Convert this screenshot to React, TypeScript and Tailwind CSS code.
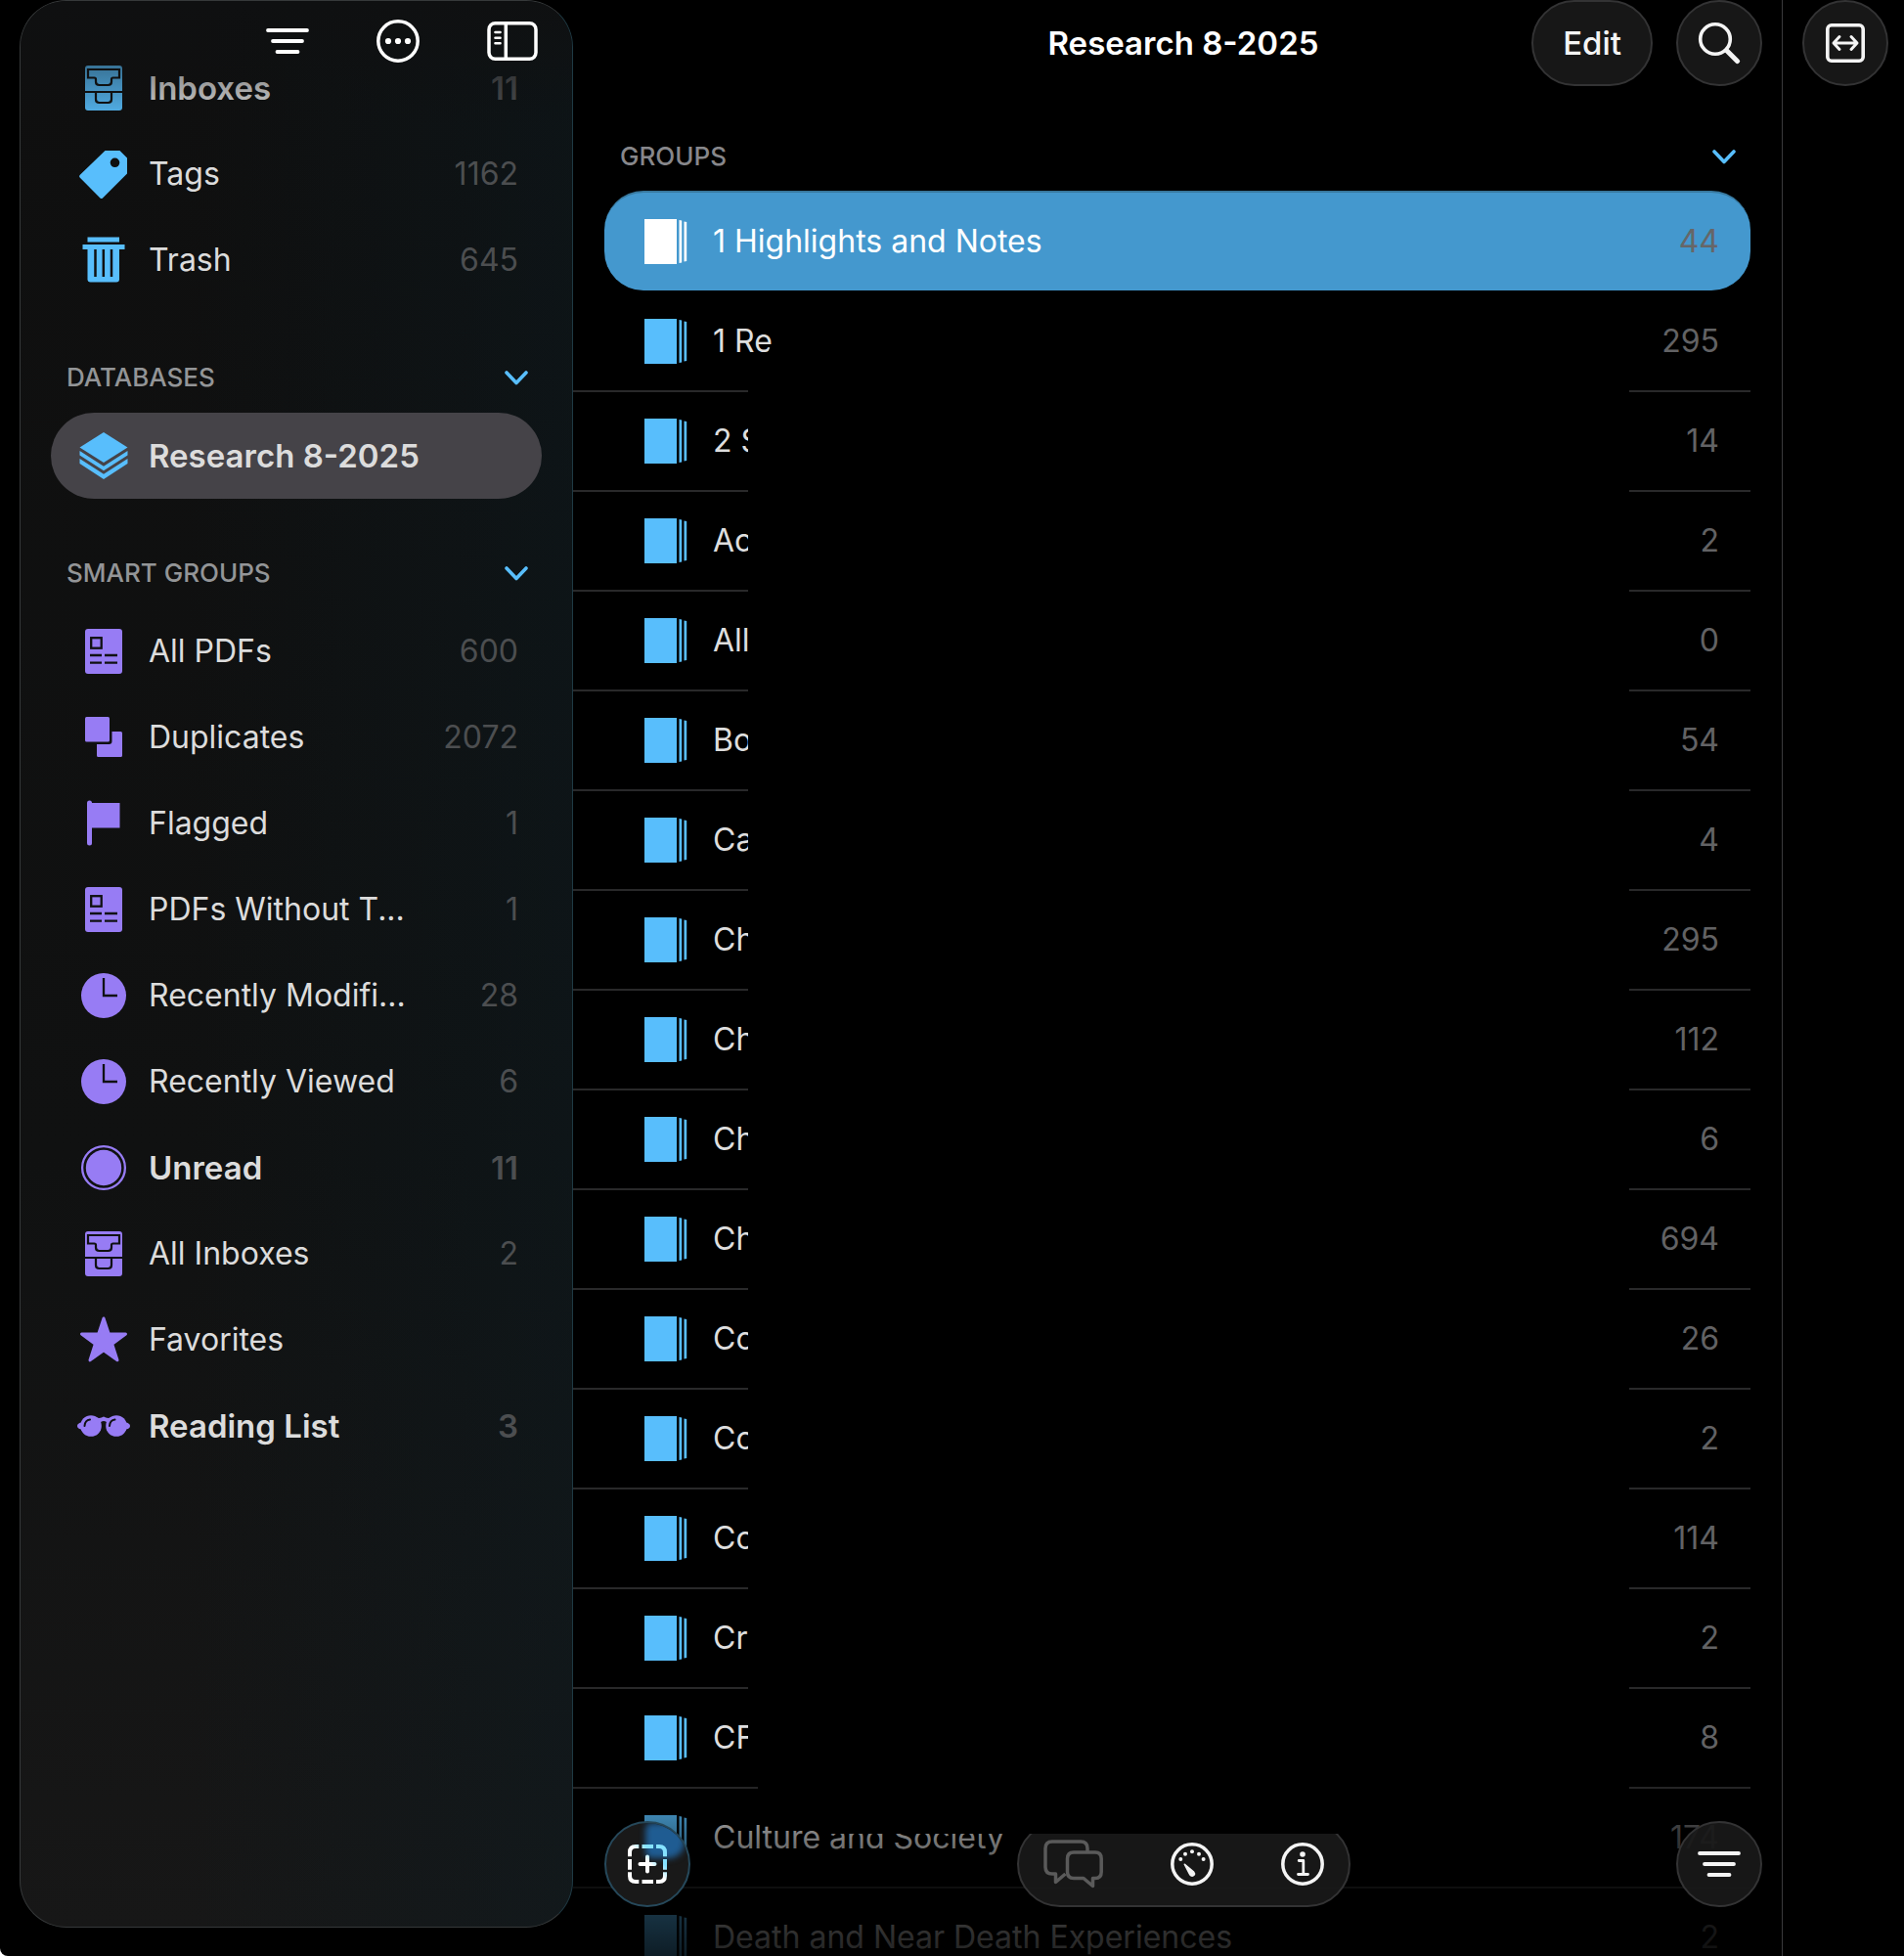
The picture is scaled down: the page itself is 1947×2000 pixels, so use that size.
import React from "react";

type IconProps = { className?: string };

const BoxesIcon = ({ className }: IconProps) => (
	<svg viewBox="0 0 56 56" className={className} fill="none">
		<rect x="9" y="5" width="38" height="46" rx="3" fill="currentColor" />
		<g stroke="#101112" strokeWidth="2.2">
			<path d="M12 9H44V17.5H37.5Q36 17.5 36 19V21.5Q36 25 32.5 25H23.5Q20 25 20 21.5V19Q20 17.5 18.5 17.5H12Z" />
			<path d="M9 32H47" />
			<path d="M20 33V39.5Q20 43 23.5 43H32.5Q36 43 36 39.5V33" />
		</g>
	</svg>
);

const TagIcon = ({ className }: IconProps) => (
	<svg viewBox="0 0 56 56" className={className}>
		<path
			fill="currentColor"
			fillRule="evenodd"
			d="M29.5 4H44.5L52 11.5V27.5L27 52.5Q25.7 53.6 24.4 52.5L3.6 31.5Q2.5 30.3 3.6 29ZM39.5 11.5A4.8 4.8 0 1 0 39.5 21.1A4.8 4.8 0 1 0 39.5 11.5Z"
		/>
	</svg>
);

const TrashIcon = ({ className }: IconProps) => (
	<svg viewBox="0 0 56 56" className={className}>
		<g fill="currentColor">
			<path d="M11.5 4.5H44V9.5H11.5ZM6.5 12H49.5V17H6.5Z" />
			<path d="M11.5 17H44V47.5Q44 50.5 41 50.5H14.5Q11.5 50.5 11.5 47.5Z" />
		</g>
		<path stroke="#101112" strokeWidth="2.5" d="M19.5 17V45M27.8 17V45M36 17V45" />
	</svg>
);

const LayersIcon = ({ className }: IconProps) => (
	<svg viewBox="0 0 56 56" className={className} fill="currentColor">
		<path d="M28 4L52.5 19.5L28 35L3.5 19.5Z" />
		<path d="M3.5 23L28 38.8L52.5 23V27.5L28 43.2L3.5 27.5Z" />
		<path d="M3.5 31L28 46.8L52.5 31V36L28 52L3.5 36Z" />
	</svg>
);

const DocumentIcon = ({ className }: IconProps) => (
	<svg viewBox="0 0 56 56" className={className} fill="none">
		<rect x="9" y="5" width="38" height="46" rx="3" fill="currentColor" />
		<g stroke="#101112" strokeWidth="2.3">
			<rect x="15.2" y="14.2" width="10.5" height="10.5" />
			<path d="M14 32H26M29 32H42M14 39.7H26M29 39.7H42" />
		</g>
	</svg>
);

const DuplicatesIcon = ({ className }: IconProps) => (
	<svg viewBox="0 0 56 56" className={className} fill="currentColor">
		<rect x="9" y="7" width="25" height="25.5" rx="1.5" />
		<path d="M36.5 22H45.5Q47 22 47 23.5V46.5Q47 48 45.5 48H22.5Q21 48 21 46.5V35H33.5Q36.5 35 36.5 32Z" />
	</svg>
);

const FlagIcon = ({ className }: IconProps) => (
	<svg viewBox="0 0 56 56" className={className} fill="currentColor">
		<rect x="11" y="4.5" width="5" height="46" rx="2.5" />
		<path d="M13 7H44.5V32.5H13Z" />
	</svg>
);

const ClockIcon = ({ className }: IconProps) => (
	<svg viewBox="0 0 56 56" className={className} fill="none">
		<circle cx="28" cy="28" r="23" fill="currentColor" />
		<path stroke="#101112" strokeWidth="2.3" d="M28 10V28H42" />
	</svg>
);

const UnreadIcon = ({ className }: IconProps) => (
	<svg viewBox="0 0 56 56" className={className} fill="none">
		<circle cx="28" cy="28" r="21.9" stroke="currentColor" strokeWidth="2.3" />
		<circle cx="28" cy="28" r="18.2" fill="currentColor" />
	</svg>
);

const StarIcon = ({ className }: IconProps) => (
	<svg viewBox="0 0 56 56" className={className}>
		<path
			fill="currentColor"
			stroke="currentColor"
			strokeWidth="3"
			strokeLinejoin="round"
			d="M28 6L33.3 22H50.5L36.7 32.2L42 48.8L28 38.8L14 48.8L19.3 32.2L5.5 22H22.7Z"
		/>
	</svg>
);

const GlassesIcon = ({ className }: IconProps) => (
	<svg viewBox="0 0 56 56" className={className} fill="none">
		<g fill="currentColor">
			<circle cx="15" cy="28" r="10.8" />
			<circle cx="41" cy="28" r="10.8" />
			<path d="M5 24.5Q1 25.5 1 28Q1 30.5 5 31.5ZM51 24.5Q55 25.5 55 28Q55 30.5 51 31.5Z" />
			<path d="M20 19Q24 21 28 18.5Q32 21 36 19L32 26Q31 23 28 23Q25 23 24 26Z" />
		</g>
		<path
			stroke="#101112"
			strokeWidth="2"
			strokeLinecap="round"
			d="M8.5 28Q9 22 14 21.5M34 28Q34.5 22 39.5 21.5"
		/>
	</svg>
);

const ChevronIcon = () => (
	<svg viewBox="0 0 24 16" className="h-4 w-6 text-[#58befc]" fill="none">
		<path
			stroke="currentColor"
			strokeWidth="3.6"
			strokeLinecap="round"
			strokeLinejoin="round"
			d="M2 3L12 13.5L22 3"
		/>
	</svg>
);

const FilterIcon = () => (
	<svg viewBox="0 0 44 44" className="size-11" fill="none">
		<path
			stroke="currentColor"
			strokeWidth="3.8"
			strokeLinecap="round"
			d="M2 11H42M7 22H37M11.5 33H32.5"
		/>
	</svg>
);

const BooksIcon = ({ className }: IconProps) => (
	<svg viewBox="0 0 44 46" className={className} fill="currentColor">
		<path d="M0 0H33V46H0ZM35.5 1L38.2 1.5V44.5L35.5 45ZM40.5 2.5L43.2 3V43L40.5 43.5Z" />
	</svg>
);

const shortcuts = [
	{ name: "Inboxes", count: "11", icon: BoxesIcon, bold: true },
	{ name: "Tags", count: "1162", icon: TagIcon },
	{ name: "Trash", count: "645", icon: TrashIcon },
];

const databases = [
	{ name: "Research 8-2025", icon: LayersIcon, bold: true, selected: true },
];

const smartGroups = [
	{ name: "All PDFs", count: "600", icon: DocumentIcon },
	{ name: "Duplicates", count: "2072", icon: DuplicatesIcon },
	{ name: "Flagged", count: "1", icon: FlagIcon },
	{ name: "PDFs Without T...", count: "1", icon: DocumentIcon },
	{ name: "Recently Modifi...", count: "28", icon: ClockIcon },
	{ name: "Recently Viewed", count: "6", icon: ClockIcon },
	{ name: "Unread", count: "11", icon: UnreadIcon, bold: true },
	{ name: "All Inboxes", count: "2", icon: BoxesIcon },
	{ name: "Favorites", icon: StarIcon },
	{ name: "Reading List", count: "3", icon: GlassesIcon, bold: true },
];

const groups = [
	{ name: "1 Highlights and Notes", count: "44" },
	{ name: "1 Re", count: "295" },
	{ name: "2 S", count: "14" },
	{ name: "Ac", count: "2" },
	{ name: "All", count: "0" },
	{ name: "Bo", count: "54" },
	{ name: "Ca", count: "4" },
	{ name: "Ch", count: "295" },
	{ name: "Ch", count: "112" },
	{ name: "Ch", count: "6" },
	{ name: "Ch", count: "694" },
	{ name: "Co", count: "26" },
	{ name: "Co", count: "2" },
	{ name: "Co", count: "114" },
	{ name: "Cr", count: "2" },
	{ name: "CF", count: "8" },
	{ name: "Culture and Society", count: "174" },
	{ name: "Death and Near Death Experiences", count: "2" },
];

const SidebarList = ({ items, color }: { items: any[]; color: string }) => (
	<ul>
		{items.map(({ name, count, icon: Icon, bold, selected }, index) => (
			<li key={index}>
				<a
					href="#"
					className={`flex h-22 items-center gap-[18px] rounded-full pr-6 pl-[26px] ${
						selected ? "bg-[#454348]" : ""
					} ${bold ? "text-[33px] font-semibold" : ""}`}
				>
					<Icon className={`size-14 shrink-0 ${color}`} />
					<span className="flex-1 truncate text-[#dcdcdc]">{name}</span>
					<span className="text-[#4c4e50]">{count}</span>
				</a>
			</li>
		))}
	</ul>
);

const SectionHeading = ({ title }: { title: string }) => (
	<button className="mt-10 flex h-18 w-full items-center justify-between pr-3.5 pl-4">
		<h2 className="text-[26px] font-medium text-[#939597]">{title}</h2>
		<ChevronIcon />
	</button>
);

const Sidebar = () => (
	<aside className="relative mb-[29px] ml-5 w-[566px] shrink-0 overflow-hidden rounded-[48px] border border-[#36393a] border-r-[#1f3a44] bg-[linear-gradient(to_right,transparent_30%,#0b1b2266),linear-gradient(to_bottom,#0f0f0f,#101111_60%,#171717)]">
		<nav className="px-[31px] pt-[45px]">
			<SidebarList items={shortcuts} color="text-[#58befc]" />
			<SectionHeading title="DATABASES" />
			<SidebarList items={databases} color="text-[#58befc]" />
			<SectionHeading title="SMART GROUPS" />
			<SidebarList items={smartGroups} color="text-[#977cf4]" />
		</nav>
		<div className="absolute inset-x-0 top-0 flex h-32 items-start justify-end gap-[69px] bg-linear-to-b from-[#0f1011] via-[#0f1011]/45 to-transparent pt-[19px] pr-[35px] text-white">
			<button aria-label="Sort">
				<FilterIcon />
			</button>
			<button aria-label="More">
				<svg viewBox="0 0 44 44" className="size-11" fill="none">
					<circle cx="22" cy="22" r="20.2" stroke="currentColor" strokeWidth="3.5" />
					<g fill="currentColor">
						<circle cx="12" cy="22" r="3.1" />
						<circle cx="22" cy="22" r="3.1" />
						<circle cx="32" cy="22" r="3.1" />
					</g>
				</svg>
			</button>
			<button aria-label="Toggle sidebar">
				<svg viewBox="0 0 52 44" className="h-11 w-13" fill="none" stroke="currentColor">
					<rect x="2" y="3.7" width="48" height="36.6" rx="6.5" strokeWidth="3.5" />
					<path strokeWidth="3.5" d="M19.3 4V40" />
					<path
						strokeWidth="2.6"
						strokeLinecap="round"
						d="M8.5 13H13.5M8.5 18.7H13.5M8.5 24.3H13.5"
					/>
				</svg>
			</button>
		</div>
	</aside>
);

const GroupRow = ({
	name,
	count,
	selected,
}: {
	name: string;
	count: string;
	selected: boolean;
}) =>
	selected ? (
		<li className="pl-8">
			<a
				href="#"
				className="flex h-[102px] items-center rounded-[40px] border-t-2 border-[#38799f] bg-[#4498ce] pr-8 pl-[41px]"
			>
				<BooksIcon className="h-[46px] w-11 text-white" />
				<span className="ml-[26px] flex-1 text-white">{name}</span>
				<span className="text-[#666668]">{count}</span>
			</a>
		</li>
	) : (
		<li className="border-t-2 border-[#29292a] nth-2:border-transparent">
			<a href="#" className="flex h-25 items-center pr-8 pl-[73px]">
				<BooksIcon className="h-[46px] w-11 text-[#58befc]" />
				<span className="ml-[26px] flex-1 text-[#dedede]">{name}</span>
				<span className="text-[#626264]">{count}</span>
			</a>
		</li>
	);

const pill =
	"flex h-22 items-center justify-center rounded-full border-2 border-[#333334] bg-[#191919]/90 text-[#f4f4f4]";

const BottomBar = () => (
	<div className="absolute inset-x-0 bottom-[50px] flex items-center justify-between pr-5 pl-8">
		<button
			aria-label="Add"
			className="relative flex size-22 items-center justify-center overflow-hidden rounded-full border-2 border-[#26485a] bg-[#191919]"
		>
			<span className="absolute top-0 right-1 h-9 w-10 rounded-md rounded-br-2xl bg-[#1f5c92] blur-[3px]" />
			<svg viewBox="0 0 40 40" className="relative size-10" fill="none">
				<defs>
					<linearGradient
						id="addTint"
						gradientUnits="userSpaceOnUse"
						x1="17"
						y1="20"
						x2="31"
						y2="6"
					>
						<stop offset="0.2" stopColor="#fff" />
						<stop offset="0.7" stopColor="#86e2ff" />
					</linearGradient>
				</defs>
				<g stroke="url(#addTint)" strokeWidth="4">
					<path d="M2 12.3V8Q2 2 8 2H11.3M14.5 2H26M29 2H32Q38 2 38 8V12.3M38 15V25.7M38 28.3V32Q38 38 32 38H29M26 38H14.5M11.3 38H8Q2 38 2 32V28.3M2 25.7V15" />
					<path strokeLinecap="round" d="M20 12.5V27.5M12.5 20H27.5" />
				</g>
			</svg>
		</button>
		<div className={`${pill} gap-[69px] px-[25px]`}>
			<button aria-label="Chat" className="text-[#5a5a5a]">
				<svg
					viewBox="0 0 61 50"
					className="h-[50px] w-[61px]"
					fill="none"
					stroke="currentColor"
					strokeWidth="3.5"
					strokeLinejoin="round"
				>
					<path d="M45 12V9Q45 2 38 2H9Q2 2 2 9V28Q2 35 9 35H12.5V43.5L22.5 35" />
					<path d="M31 13H53Q59.2 13 59.2 19.5V33Q59.2 39.5 53 39.5H50.5V47.5L41 39.5H31Q24.5 39.5 24.5 33V19.5Q24.5 13 31 13Z" />
				</svg>
			</button>
			<button aria-label="Activity">
				<svg viewBox="0 0 44 44" className="size-11" fill="none">
					<circle cx="22" cy="22" r="20.2" stroke="currentColor" strokeWidth="3.5" />
					<g fill="currentColor">
						<circle cx="10.3" cy="17" r="2" />
						<circle cx="15" cy="11.7" r="2" />
						<circle cx="22" cy="9.3" r="2" />
						<circle cx="29" cy="11.7" r="2" />
						<circle cx="33.6" cy="17" r="2" />
						<path d="M14 21.5Q14.5 21.3 15 21.8L24.2 29.5Q26 31.5 24.6 33.8Q22.5 36 19.8 34Q19 33.2 18.5 32L13.6 22.5Q13.3 21.8 14 21.5Z" />
					</g>
				</svg>
			</button>
			<button aria-label="Info">
				<svg viewBox="0 0 44 44" className="size-11" fill="none">
					<circle cx="22" cy="22" r="20.2" stroke="currentColor" strokeWidth="3.5" />
					<circle cx="22" cy="12" r="2.8" fill="currentColor" />
					<path
						stroke="currentColor"
						strokeWidth="2.8"
						strokeLinecap="round"
						strokeLinejoin="round"
						d="M18.2 18.5H22.8V32M17.5 32.5H27.5"
					/>
				</svg>
			</button>
		</div>
		<button aria-label="Filter" className={`${pill} w-22`}>
			<FilterIcon />
		</button>
	</div>
);

export default function App() {
	return (
		<div className="bg-white">
			<div className="flex h-screen overflow-hidden rounded-bl-lg bg-black font-['Inter','Liberation_Sans',sans-serif] text-[32px] leading-10 text-white">
				<Sidebar />
				<main className="relative min-w-0 flex-1 overflow-hidden border-r border-[#3a3a3c]">
					<header className="grid h-22 grid-cols-[1fr_auto_1fr] items-center pr-5 pl-8">
						<h1 className="col-start-2 text-[33px] font-semibold">Research 8-2025</h1>
						<div className="flex justify-end gap-6">
							<button className={`${pill} px-[30px] text-[33px] font-medium`}>Edit</button>
							<button aria-label="Search" className={`${pill} w-22`}>
								<svg
									viewBox="0 0 44 44"
									className="size-11"
									fill="none"
									stroke="currentColor"
									strokeLinecap="round"
								>
									<circle cx="18" cy="18" r="15.3" strokeWidth="3.6" />
									<path strokeWidth="5" d="M30 30L40.5 40.5" />
								</svg>
							</button>
						</div>
					</header>
					<button className="mt-9 flex h-18 w-full items-center justify-between pr-[47px] pl-12">
						<h2 className="text-[26px] font-medium text-[#87878b]">GROUPS</h2>
						<ChevronIcon />
					</button>
					<ul className="-mt-px pr-8">
						{groups.map((group, index) => (
							<GroupRow key={index} {...group} selected={index === 0} />
						))}
					</ul>
					<div className="absolute inset-x-0 bottom-0 h-48 bg-linear-to-b from-transparent via-black/60 to-black/85" />
					<BottomBar />
					{/* blacked out part of the list */}
					<div className="absolute top-[297px] right-[156px] bottom-[125px] left-[179px] bg-black [clip-path:polygon(26px_0,100%_0,100%_100%,80px_100%,80px_calc(100%-16px),10px_calc(100%-16px),10px_calc(100%-60px),0_calc(100%-60px),0_90px,18px_68px,26px_50px)]" />
				</main>
				<div className="w-31 shrink-0 pl-5">
					<button aria-label="Expand" className={`${pill} w-22`}>
						<svg
							viewBox="0 0 40 40"
							className="size-10"
							fill="none"
							stroke="currentColor"
							strokeLinecap="round"
							strokeLinejoin="round"
						>
							<rect x="1.8" y="1.8" width="36.4" height="36.4" rx="4" strokeWidth="3.6" />
							<path strokeWidth="3" d="M8.5 20H31.5M14 13.5L8 20L14 26.5M26 13.5L32 20L26 26.5" />
						</svg>
					</button>
				</div>
			</div>
		</div>
	);
}
